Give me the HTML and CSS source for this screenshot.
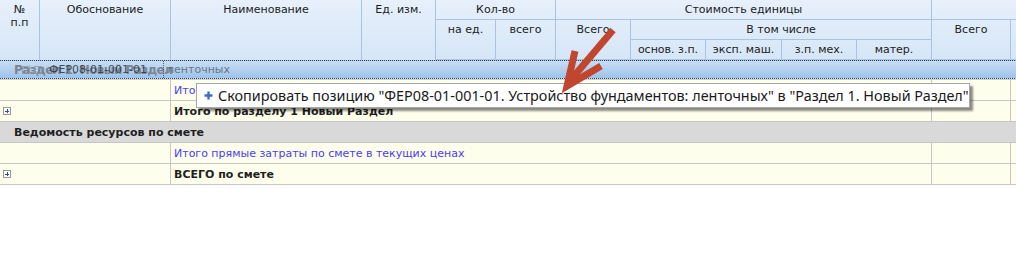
FILE: index.html
```html
<!DOCTYPE html>
<html lang="ru">
<head>
  <meta charset="utf-8">
  <title>Локальная смета</title>
  <link rel="stylesheet" href="styles.css">
</head>
<body>
  <div class="grid">
    <div class="head">
      <div class="hc rows3">№<br>п.п</div>
      <div class="hc rows3">Обоснование</div>
      <div class="hc rows3">Наименование</div>
      <div class="hc rows3">Ед. изм.</div>
      <div class="hc cols2">Кол-во</div>
      <div class="hc cols5">Стоимость единицы</div>
      <div class="hc cols2"></div>
      <div class="hc rows2">на ед.</div>
      <div class="hc rows2">всего</div>
      <div class="hc rows2">Всего</div>
      <div class="hc cols4">В том числе</div>
      <div class="hc rows2">Всего</div>
      <div class="hc rows2"></div>
      <div class="hc">основ. з.п.</div>
      <div class="hc">эксп. маш.</div>
      <div class="hc">з.п. мех.</div>
      <div class="hc">матер.</div>
    </div>

    <div class="section">
      <span class="section-title">Раздел 1. Новый Раздел</span>
      <div class="ghost">
        <div class="ghost-code">
          <span class="tbox"></span><span class="tbox"></span>
          <span>ФЕР08-01-001-01</span>
        </div>
        <div class="ghost-name">ленточных</div>
      </div>
    </div>

    <div class="rows">
      <div class="row">
        <div class="cell"></div>
        <div class="cell link">Итого прямые затраты по разделу в текущих ценах</div>
        <div class="cell"></div>
        <div class="cell"></div>
      </div>
      <div class="row">
        <div class="cell"><span class="expand"></span></div>
        <div class="cell bold">Итого по разделу 1 Новый Раздел</div>
        <div class="cell"></div>
        <div class="cell"></div>
      </div>
      <div class="row group">
        <div class="cell bold">Ведомость ресурсов по смете</div>
      </div>
      <div class="row">
        <div class="cell"></div>
        <div class="cell link">Итого прямые затраты по смете в текущих ценах</div>
        <div class="cell"></div>
        <div class="cell"></div>
      </div>
      <div class="row">
        <div class="cell"><span class="expand"></span></div>
        <div class="cell bold">ВСЕГО по смете</div>
        <div class="cell"></div>
        <div class="cell"></div>
      </div>
    </div>

    <div class="tooltip">
      <svg class="tip-plus" width="9" height="9" viewBox="0 0 9 9">
        <path d="M4.5 0.5v8M0.5 4.5h8" stroke="#3f6bc6" stroke-width="2.4"/>
      </svg>
      <span>Скопировать позицию "ФЕР08-01-001-01. Устройство фундаментов: ленточных" в "Раздел 1. Новый Раздел"</span>
    </div>

    <svg class="arrow" width="70" height="70" viewBox="0 0 70 70">
      <path d="M57 5L13 57" stroke="#c1462f" stroke-width="7" fill="none"/>
      <path d="M19 26L11 61L45 41" stroke="#c1462f" stroke-width="7" fill="none" stroke-linejoin="miter"/>
    </svg>
  </div>
</body>
</html>
```

FILE: styles.css
```css
html,
body {
  margin: 0;
  padding: 0;
}
body {
  width: 1016px;
  height: 257px;
  overflow: hidden;
  background: #fff;
  font-family: "DejaVu Sans", Tahoma, sans-serif;
  font-size: 11px;
  color: #1b1b1b;
}
.grid {
  position: relative;
  width: 1111px;
}

/* header */
.head {
  display: grid;
  grid-template-columns: 40px 131px 191px 74px 60px 60px 75px 75px 76px 75px 75px 79px 100px;
  grid-template-rows: 20px 20px 20px;
  background: linear-gradient(#e7f0fb, #d6e6f7);
}
.hc {
  box-sizing: border-box;
  border-right: 1px solid #a9c3e5;
  border-bottom: 1px solid #a9c3e5;
  padding-top: 3px;
  text-align: center;
  line-height: 13px;
  white-space: nowrap;
  overflow: hidden;
}
.head .hc:nth-child(-n+4) {
  border-bottom: 0;
}
.rows2 { grid-row: span 2; }
.rows3 { grid-row: span 3; }
.cols2 { grid-column: span 2; }
.cols4 { grid-column: span 4; }
.cols5 { grid-column: span 5; }

/* dragged section row */
.section {
  position: relative;
  box-sizing: border-box;
  height: 19px;
  border-top: 1px dotted #3c4450;
  border-bottom: 1px dotted #3c4450;
  background: linear-gradient(#c9ddf3, #9dc3ea);
}
.section-title {
  display: block;
  padding: 1px 0 0 14px;
  font-weight: bold;
  font-size: 12px;
  letter-spacing: -0.6px;
  line-height: 16px;
  color: #7a8593;
}
.ghost {
  position: absolute;
  left: 0;
  top: 0;
  bottom: 0;
  display: flex;
  align-items: center;
  opacity: 0.8;
}
.ghost-code {
  display: flex;
  align-items: center;
  gap: 4px;
  width: 164px;
  height: 100%;
  padding-left: 22px;
  box-sizing: border-box;
  border-right: 1px dotted #3c4450;
  color: #2a2d33;
}
.ghost-code span:last-child {
  margin-left: 3px;
}
.tbox {
  width: 8px;
  height: 8px;
  border: 1px solid #8d96a3;
  box-sizing: border-box;
}
.ghost-name {
  padding-left: 3px;
  color: #5a6069;
}

/* body rows */
.rows {
  border-top: 1px solid #d0d0d0;
}
.row {
  display: grid;
  grid-template-columns: 171px 761px 79px 100px;
  height: 21px;
  box-sizing: border-box;
  border-bottom: 1px solid #c6c6c6;
  background: #fefeec;
}
.cell {
  box-sizing: border-box;
  border-right: 1px solid #c6c6c6;
  padding: 2px 0 0 3px;
  line-height: 18px;
  white-space: nowrap;
  overflow: hidden;
}
.row.group {
  grid-template-columns: 1fr;
  background: #d9d9d9;
}
.row.group .cell {
  border-right: 0;
  padding-left: 14px;
}
.bold {
  font-weight: bold;
  color: #1f1f1f;
}
.link {
  color: #4a3cf6;
}
.expand {
  display: inline-block;
  position: relative;
  width: 8px;
  height: 8px;
  margin-top: 4px;
  border: 1px solid #9a9a9a;
  box-sizing: border-box;
  background: #fff;
  vertical-align: top;
}
.expand::before,
.expand::after {
  content: "";
  position: absolute;
  background: #2d4f9a;
}
.expand::before {
  left: 1px;
  top: 2.5px;
  width: 4px;
  height: 1px;
}
.expand::after {
  left: 2.5px;
  top: 1px;
  width: 1px;
  height: 4px;
}

/* drag tooltip */
.tooltip {
  position: absolute;
  left: 196px;
  top: 83px;
  width: 774px;
  height: 25px;
  box-sizing: border-box;
  display: flex;
  align-items: center;
  gap: 5px;
  padding-left: 7px;
  border: 1px solid #a7a7a7;
  background: #fff;
  box-shadow: 3px 3px 2px rgba(0, 0, 0, 0.45);
  font-family: "Noto Sans", "Open Sans", sans-serif;
  font-size: 14.4px;
  color: #1a1a1a;
  white-space: nowrap;
}
.tip-plus {
  flex: none;
}
.arrow {
  position: absolute;
  left: 556px;
  top: 25px;
}
```
